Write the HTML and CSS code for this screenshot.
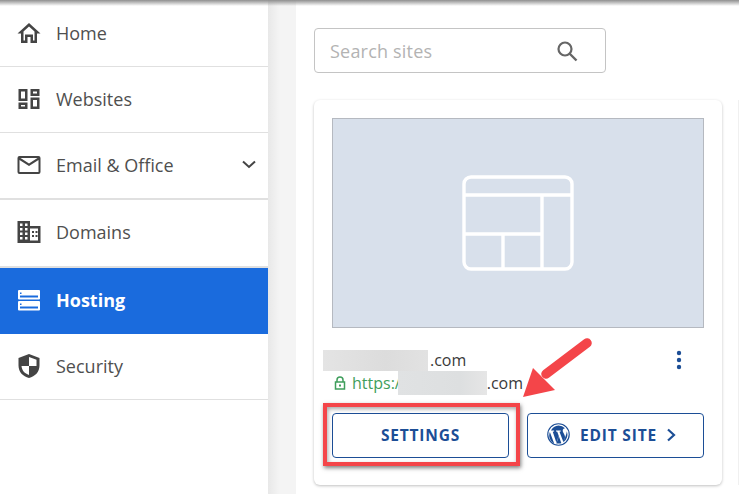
FILE: index.html
```html
<!DOCTYPE html>
<html>
  <head>
    <meta charset="utf-8">
    <title>Sites</title>
    <link rel="stylesheet" href="styles.css">
  </head>
  <body>
    <div class="topshade"></div>
    <div class="app">
      <ul class="nav">
        <li class="nav-item nav-first">
          <svg class="nav-icon" viewBox="0 0 24 24"><path d="M12 2 .5 12.500H4V22h6.500v-6h3v6H20v-9.500h3.500z M12 5.500l5.500 5V19.500h-1.500v-6H8v6H6.500v-9z" fill-rule="evenodd"/></svg>
          <span>Home</span>
        </li>
        <li class="nav-item">
          <svg class="nav-icon" viewBox="0 0 24 24"><path d="M1.500 2h9v12h-9z M4 4.500v7h4v-7z M13.500 2h9v7h-9z M16 4.500v2h4v-2z M13.500 10.500h9V22h-9z M16 13v6.500h4V13z M1.500 15.500h9V22h-9z M4 18v1.500h4V18z" fill-rule="evenodd"/></svg>
          <span>Websites</span>
        </li>
        <li class="nav-item nav-thick">
          <svg class="nav-icon" viewBox="0 0 24 24"><path d="M2.500 3h19A2 2 0 0 1 23.500 5v14a2 2 0 0 1-2 2h-19a2 2 0 0 1-2-2V5a2 2 0 0 1 2-2z M2.500 7v12h19V7L12 13z M3.500 5 12 10.500 20.500 5z" fill-rule="evenodd"/></svg>
          <span>Email &amp; Office</span>
          <svg class="chevron" viewBox="0 0 14 9"><path d="M1 1.500 7 7l6-5.500" fill="none" stroke="#444" stroke-width="2"/></svg>
        </li>
        <li class="nav-item nav-domains">
          <svg class="nav-icon" viewBox="0 0 24 24"><path d="M.5 1h12.500v5h10.500v17H.5z M3 3.500v2.500h2.500V3.500z M8 3.500v2.500h2.500V3.500z M3 8v2.500h2.500V8z M8 8v2.500h2.500V8z M3 12.500V15h2.500v-2.500z M8 12.500V15h2.500v-2.500z M3 17v2.500h2.500V17z M8 17v2.500h2.500V17z M13 8.500v12h8v-12z M15 11h2v2h-2z M15 15h2v2h-2z M18.500 11h2v2h-2z M18.500 15h2v2h-2z" fill-rule="evenodd"/></svg>
          <span>Domains</span>
        </li>
        <li class="nav-item nav-active">
          <svg class="nav-icon" viewBox="0 0 24 24"><path d="M2 2h20a1 1 0 0 1 1 1v7.500a1 1 0 0 1-1 1H2a1 1 0 0 1-1-1V3a1 1 0 0 1 1-1z M3 4.500V6h1.500V4.500z M3 7.500v2h18v-2z M2 13h20a1 1 0 0 1 1 1v7.500a1 1 0 0 1-1 1H2a1 1 0 0 1-1-1V14a1 1 0 0 1 1-1z M3 15.500V17h1.500v-1.500z M3 18.500v2h18v-2z" fill-rule="evenodd"/></svg>
          <span>Hosting</span>
        </li>
        <li class="nav-item">
          <svg class="nav-icon" viewBox="0 0 24 24"><path d="M12 0 22.500 4v7.500C22.500 18 18 22.500 12 24 6 22.500 1.500 18 1.500 11.500V4z M12 3v9H4.500c.3 4.500 3.300 7.500 7.500 9v-9h7.500V5.800z" fill-rule="evenodd"/></svg>
          <span>Security</span>
        </li>
      </ul>
      <div class="gutter"></div>
      <div class="main">
        <div class="search">
          <span class="search-text">Search sites</span>
          <svg class="search-icon" viewBox="0 0 22 22"><circle cx="9" cy="9" r="6.500" fill="none" stroke="#666" stroke-width="2.200"/><path d="m13.500 13.500 7 7" stroke="#666" stroke-width="2.400"/></svg>
        </div>
        <div class="cards">
          <div class="card">
            <div class="thumb">
              <svg class="thumb-icon" viewBox="0 0 112 96" fill="none" stroke="#fff" stroke-width="3.400">
                <rect x="2" y="2" width="108" height="92" rx="7"/>
                <path d="M2 20h108 M80 20v74 M2 59h78 M41 59v35"/>
              </svg>
            </div>
            <div class="site-head">
              <div class="site-info">
                <div class="site-name">.com</div>
                <div class="site-url">
                  <svg class="lock" viewBox="0 0 12 14"><path d="M3 6V4a3 3 0 0 1 6 0v2 M1.500 6h9v7h-9z" fill="none" stroke="#3f9e5c" stroke-width="1.500"/><rect x="5" y="8.500" width="2" height="2" fill="#3f9e5c"/></svg>
                  <span class="url-green">https:/</span><span class="url-gap"></span><span class="url-end">.com</span>
                </div>
              </div>
              <svg class="dots" viewBox="0 0 6 20"><circle cx="3" cy="3" r="2.200"/><circle cx="3" cy="10" r="2.200"/><circle cx="3" cy="17" r="2.200"/></svg>
            </div>
            <div class="actions">
              <div class="btn">SETTINGS</div>
              <div class="btn btn-edit">
                <svg class="wp" viewBox="0 0 24 24"><circle cx="12" cy="12" r="11.200" fill="none" stroke="#1c4e96" stroke-width="1.200"/><path fill="#1c4e96" fill-rule="evenodd" d="M12 2.500a9.500 9.500 0 0 1 6.800 2.900c-1.500 0-2.400 1.200-2.400 2.500 0 1.300.7 2.300 1.400 3.500.5.900 1 2 1 3.500l-1.700 4.900L13 9l1.300-.1V7.700H9.400v1.200l1.300.1 1.700 4.700-2.500 7.200L6 9l1.400-.1V7.700H4.100A9.500 9.500 0 0 1 12 2.500z M3 9.500l4.500 12A9.500 9.500 0 0 1 3 9.500z M12.300 13.500l2.700 7.500a9.500 9.500 0 0 1-5.500.1z M20.600 8.500a9.500 9.500 0 0 1-3.500 11.500l2.700-7.600c.5-1.300.8-2.600.8-3.900z"/></svg>
                <span>EDIT SITE</span>
                <svg class="btn-chevron" viewBox="0 0 10 14"><path d="m2 1.500 6 5.500-6 5.500" fill="none" stroke="#1c4e96" stroke-width="2.200"/></svg>
              </div>
            </div>
          </div>
          <div class="card-next"></div>
        </div>
      </div>
    </div>
    <!-- annotation layer -->
    <div class="blur blur-name"></div>
    <div class="blur blur-url"></div>
    <div class="mark"></div>
    <svg class="arrow" viewBox="0 0 80 70"><path d="M65 5 24 36" stroke="#f44549" stroke-width="9.500" stroke-linecap="round" fill="none"/><path d="M1 59 11 30 33 52z" fill="#f44549"/></svg>
  </body>
</html>
```

FILE: styles.css
```css
*{
  box-sizing: border-box;
}
html,body{
  margin: 0;
  height: 100%;
  overflow: hidden;
}
body{
  background: #fff;
  font-family: "Open Sans", "Liberation Sans", sans-serif;
  color: #4f4f4f;
}
.topshade{
  position: absolute;
  top: 0;
  left: 0;
  width: 100%;
  height: 6px;
  background: linear-gradient(#8f8f8f, rgba(255,255,255,0));
  z-index: 2;
}
.app{
  display: flex;
  height: 494px;
}
.nav{
  list-style: none;
  margin: 0;
  padding: 0;
  width: 268px;
  flex: none;
}
.nav-item{
  display: flex;
  align-items: center;
  height: 66px;
  padding: 0 12px 2px 17px;
  border-bottom: 1px solid #e0e0e0;
  font-size: 18px;
}
.nav-item span{
  margin-left: 15px;
}
.nav-first{
  height: 67px;
  padding-bottom: 0;
}
.nav-thick{
  height: 67px;
  border-bottom-width: 2px;
}
.nav-domains{
  height: 68px;
  border-bottom: 2px solid #e0e0e0;
}
.nav-active{
  background: #1a6bdd;
  color: #fff;
  font-weight: 700;
  border-bottom: 0;
}
.nav-icon{
  width: 24px;
  height: 24px;
  flex: none;
  fill: #444;
}
.nav-active .nav-icon{
  fill: #fff;
}
.chevron{
  width: 14px;
  height: 9px;
  margin-left: auto;
}
.gutter{
  width: 28px;
  flex: none;
  background: linear-gradient(90deg, #e8e8e8, #f4f4f4 40%, #f4f4f4);
}
.main{
  flex: 1;
  min-width: 0;
  padding: 28px 0 0 18px;
}
.search{
  display: flex;
  align-items: center;
  justify-content: space-between;
  width: 292px;
  height: 45px;
  padding: 0 27px 0 15px;
  border: 1px solid #c4c4c4;
  border-radius: 4px;
}
.search-text{
  font-size: 18px;
  letter-spacing: .2px;
  color: #b3b3b3;
}
.search-icon{
  width: 22px;
  height: 22px;
}
.cards{
  display: flex;
  gap: 16px;
  margin-top: 27px;
}
.card{
  flex: none;
  width: 408px;
  height: 385px;
  padding: 18px;
  border-radius: 6px;
  background: #fff;
  box-shadow: 0 1px 3px rgba(0,0,0,.25);
}
.card-next{
  flex: 1;
  min-width: 0;
  background: #f0f0f0;
}
.thumb{
  display: flex;
  align-items: center;
  justify-content: center;
  height: 210px;
  background: #d8e0eb;
  border: 1px solid #b5b9c0;
}
.thumb-icon{
  width: 112px;
  height: 96px;
}
.site-head{
  display: flex;
  justify-content: space-between;
  height: 85px;
  padding: 21px 22px 0 0;
}
.site-name{
  font-size: 16px;
  line-height: 22px;
  padding-left: 98px;
  color: #3a3a3a;
}
.site-url{
  display: flex;
  align-items: center;
  font-size: 16px;
  line-height: 24px;
  padding-left: 2px;
  color: #3a3a3a;
}
.lock{
  width: 12px;
  height: 14px;
  margin-right: 6px;
}
.url-green{
  color: #3f9e5c;
}
.url-gap{
  width: 86px;
}
.dots{
  width: 6px;
  height: 20px;
  margin-top: 1px;
  fill: #1c4e96;
}
.actions{
  display: flex;
  gap: 18px;
}
.btn{
  display: flex;
  align-items: center;
  justify-content: center;
  width: 177px;
  height: 45px;
  padding-bottom: 2px;
  border: 1px solid #1c4e96;
  border-radius: 4px;
  color: #1c4e96;
  font-size: 15.500px;
  font-weight: 700;
  letter-spacing: .800px;
}
.btn-edit{
  padding-right: 8px;
}
.wp{
  width: 23px;
  height: 23px;
  margin-right: 10px;
}
.btn-chevron{
  width: 10px;
  height: 14px;
  margin-left: 9px;
}
.blur{
  position: absolute;
}
.blur-name{
  left: 323px;
  top: 350px;
  width: 105px;
  height: 21px;
  background: linear-gradient(90deg, #e4e4e4, #dcdcdc 60%, #e2e2e2);
}
.blur-url{
  left: 398px;
  top: 371px;
  width: 89px;
  height: 24px;
  background: linear-gradient(90deg, #e0e2e3, #dddfe0 70%, #e6e6e6);
}
.mark{
  position: absolute;
  left: 323px;
  top: 403px;
  width: 197px;
  height: 63px;
  border: 4px solid #f44549;
  box-shadow: 1px 2px 4px rgba(0,0,0,.5), inset 1px 2px 4px rgba(0,0,0,.35);
}
.arrow{
  position: absolute;
  left: 522px;
  top: 338px;
  width: 80px;
  height: 70px;
}
```
